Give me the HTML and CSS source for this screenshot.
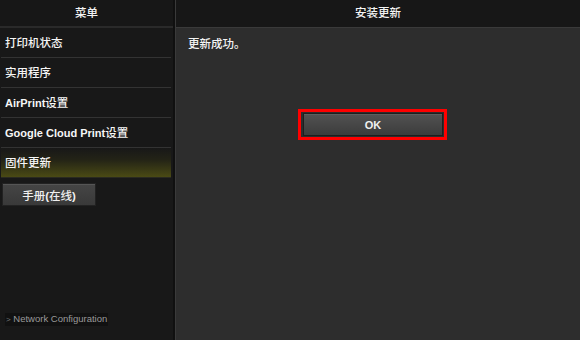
FILE: index.html
```html
<!DOCTYPE html>
<html>
<head>
<meta charset="utf-8">
<link rel="stylesheet" href="styles.css">
</head>
<body>
<div class="app">
  <aside class="side">
    <div class="head">菜单</div>
    <ul class="menu">
      <li class="item">打印机状态</li>
      <li class="item">实用程序</li>
      <li class="item"><b>AirPrint</b>设置</li>
      <li class="item"><b>Google Cloud Print</b>设置</li>
      <li class="item active">固件更新</li>
    </ul>
    <div class="manual-wrap"><button class="manual">手册<b>(</b>在线<b>)</b></button></div>
    <div class="spacer"></div>
    <div class="netconf"><span class="arrow">&gt;</span> Network Configuration</div>
  </aside>
  <main class="main">
    <div class="head">安装更新</div>
    <div class="content">
      <p class="msg">更新成功。</p>
      <div class="ok-row">
        <div class="focus"><button class="ok">OK</button></div>
      </div>
    </div>
  </main>
</div>
</body>
</html>
```

FILE: styles.css
```css
html, body {
  margin: 0;
  padding: 0;
  width: 580px;
  height: 340px;
  overflow: hidden;
  background: #2d2d2d;
  font-family: "Liberation Sans", "Noto Sans CJK SC", Arial, sans-serif;
  color: #f2f2f2;
  font-size: 11px;
}
b { font-weight: bold; }
.app {
  display: flex;
  height: 340px;
}
.side {
  width: 173px;
  background: #181818;
  display: flex;
  flex-direction: column;
  border-right: 2px solid #101010;
  box-shadow: 1px 0 0 #3a3a3a;
}
.main {
  flex: 1;
  display: flex;
  flex-direction: column;
  background: #2d2d2d;
  margin-left: 1px;
}
.head {
  height: 27px;
  line-height: 27px;
  background: #171717;
  border-bottom: 1px solid #3a3a3a;
  text-align: center;
  font-size: 11.5px;
  font-weight: 500;
  color: #f4f4f4;
}
.side .head {
  border-bottom: 2px solid #2a2a2a;
  height: 26px;
  line-height: 27px;
}
.menu {
  list-style: none;
  margin: 0;
  padding: 0 2px 0 1px;
}
.item {
  height: 29px;
  line-height: 30px;
  padding-left: 4px;
  border-bottom: 1px solid #333333;
  font-size: 11.5px;
  font-weight: 500;
  color: #f6f6f6;
}
.item b { font-size: 11px; }
.item.active {
  background: linear-gradient(to bottom, #181818 0%, #232316 40%, #4a4a14 100%);
  border-bottom: 1px solid #2a2a20;
}
.manual-wrap {
  padding: 5px 0 0 2px;
}
.manual {
  width: 94px;
  height: 23px;
  background: linear-gradient(to bottom, #454545, #393939);
  border: 1px solid #222;
  color: #f0f0f0;
  font-family: "Liberation Sans", "Noto Sans CJK SC", Arial, sans-serif;
  font-size: 11.5px;
  font-weight: 500;
  padding: 0;
  box-shadow: inset 0 1px 0 #555;
}
.spacer { flex: 1; }
.netconf {
  align-self: flex-start;
  margin: 0 0 14px 5px;
  padding: 0 1px;
  background: #111111;
  color: #9a9a9a;
  font-size: 9.5px;
  line-height: 12px;
}
.netconf .arrow { color: #777; font-size: 8px; }
.content {
  padding: 0 12px;
}
.msg {
  margin: 9px 0 0 0;
  font-size: 11.5px;
  font-weight: 500;
  color: #f4f4f4;
  line-height: 14px;
}
.ok-row {
  display: flex;
  justify-content: center;
  padding-top: 58px;
  padding-right: 11px;
}
.focus {
  border: 3px solid #ff0000;
  padding: 1px 1px 1px 2px;
  background: #2d2d2d;
}
.ok {
  display: block;
  width: 140px;
  height: 23px;
  background: linear-gradient(to bottom, #525252, #3c3c3c);
  border: 1px solid #1e1e1e;
  box-shadow: inset 0 1px 0 #5e5e5e;
  color: #f0f0f0;
  font-family: "Liberation Sans", Arial, sans-serif;
  font-size: 11px;
  font-weight: bold;
  padding: 0;
}
```
